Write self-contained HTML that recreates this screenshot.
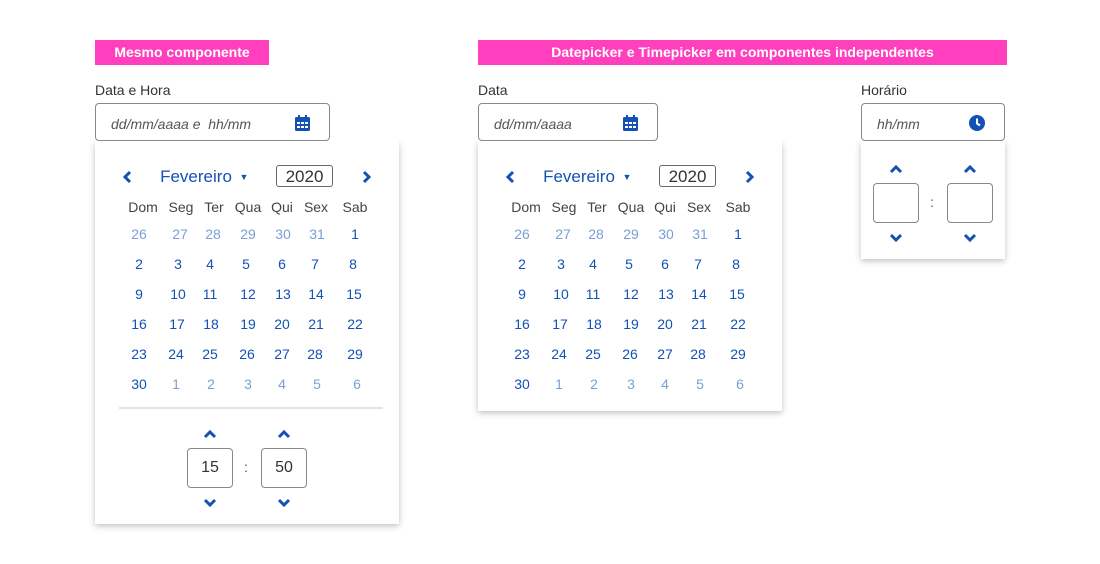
<!DOCTYPE html>
<html><head><meta charset="utf-8"><style>
body{margin:0;width:1100px;height:564px;background:#fff;font-family:"Liberation Sans",sans-serif;position:relative;overflow:hidden}
.a{position:absolute}
.c{position:absolute;transform:translate(-50%,-50%);white-space:nowrap}
.tag{position:absolute;background:#ff3fbd;color:#fff;font-weight:bold;font-size:14px;height:25px;line-height:25px;text-align:center}
.lbl{position:absolute;font-size:14px;color:#333}
.inp{position:absolute;border:1px solid #888;border-radius:4px;height:38px;box-sizing:border-box;background:#fff;z-index:2}
.ph{position:absolute;top:12px;font-style:italic;color:#555;font-size:14px}
.panel{position:absolute;background:#fff;box-shadow:0 2px 6px rgba(0,0,0,.25)}
.h{font-size:14px;color:#444}
.d{font-size:14px;color:#1351b4}
.o{font-size:14px;color:#7a9fd6}
.nav{color:#1351b4;font-size:17px}
.yr{position:absolute;border:1px solid #666;border-radius:3px;width:57px;height:22px;box-sizing:border-box;font-size:17px;text-align:center;line-height:21px;color:#333}
.tb{position:absolute;border:1px solid #888;border-radius:4px;width:46px;height:40px;box-sizing:border-box;text-align:center;line-height:38px;font-size:16px;color:#333}
</style></head><body>

<div class="tag" style="left:95px;top:40px;width:174px">Mesmo componente</div>
<div class="tag" style="left:478px;top:40px;width:529px">Datepicker e Timepicker em componentes independentes</div>

<div class="lbl" style="left:95px;top:82px">Data e Hora</div>
<div class="inp" style="left:95px;top:103px;width:235px"><span class="ph" style="left:15px">dd/mm/aaaa e &nbsp;hh/mm</span>
<svg class="a" style="left:199px;top:11px" width="15" height="16" viewBox="0 0 15 16"><rect x="0" y="2" width="15" height="14" rx="1.5" fill="#1351b4"/><rect x="3" y="0" width="2" height="4" fill="#1351b4"/><rect x="10" y="0" width="2" height="4" fill="#1351b4"/><g fill="#fff"><rect x="2" y="7" width="3" height="2"/><rect x="6" y="7" width="3" height="2"/><rect x="10" y="7" width="3" height="2"/><rect x="2" y="11" width="3" height="2"/><rect x="6" y="11" width="3" height="2"/><rect x="10" y="11" width="3" height="2"/></g></svg></div>

<div class="lbl" style="left:478px;top:82px">Data</div>
<div class="inp" style="left:478px;top:103px;width:180px"><span class="ph" style="left:15px">dd/mm/aaaa</span>
<svg class="a" style="left:144px;top:11px" width="15" height="16" viewBox="0 0 15 16"><rect x="0" y="2" width="15" height="14" rx="1.5" fill="#1351b4"/><rect x="3" y="0" width="2" height="4" fill="#1351b4"/><rect x="10" y="0" width="2" height="4" fill="#1351b4"/><g fill="#fff"><rect x="2" y="7" width="3" height="2"/><rect x="6" y="7" width="3" height="2"/><rect x="10" y="7" width="3" height="2"/><rect x="2" y="11" width="3" height="2"/><rect x="6" y="11" width="3" height="2"/><rect x="10" y="11" width="3" height="2"/></g></svg></div>

<div class="lbl" style="left:861px;top:82px">Horário</div>
<div class="inp" style="left:861px;top:103px;width:144px"><span class="ph" style="left:15px">hh/mm</span>
<svg class="a" style="left:107px;top:11px" width="16" height="16" viewBox="0 0 16 16"><circle cx="8" cy="8" r="8" fill="#1351b4"/><path d="M8 3.5V8.5L11 10.5" stroke="#fff" stroke-width="2" fill="none"/></svg></div>

<!-- panels -->
<div class="panel" style="left:95px;top:142px;width:304px;height:382px"></div>
<div class="panel" style="left:478px;top:142px;width:304px;height:269px"></div>
<div class="panel" style="left:861px;top:142px;width:144px;height:117px"></div>
<div class="a" style="left:95px;top:136px;width:304px;height:6px;background:#fff"></div>
<div class="a" style="left:478px;top:136px;width:304px;height:6px;background:#fff"></div>
<div class="a" style="left:861px;top:136px;width:144px;height:6px;background:#fff"></div>

<!-- left calendar -->
<svg class="a" style="left:122px;top:170px" width="10" height="14" viewBox="0 0 10 14"><path d="M8 2L3 7L8 12" stroke="#1351b4" stroke-width="3" fill="none"/></svg>
<svg class="a" style="left:362px;top:170px" width="10" height="14" viewBox="0 0 10 14"><path d="M2 2L7 7L2 12" stroke="#1351b4" stroke-width="3" fill="none"/></svg>
<span class="c nav" style="left:196px;top:177px">Fevereiro</span><span class="c" style="left:244px;top:177px;color:#1351b4;font-size:9px">▼</span>
<div class="yr" style="left:276px;top:165px">2020</div>
<span class="c h" style="left:143px;top:207px">Dom</span><span class="c h" style="left:181px;top:207px">Seg</span><span class="c h" style="left:214px;top:207px">Ter</span><span class="c h" style="left:248px;top:207px">Qua</span><span class="c h" style="left:282px;top:207px">Qui</span><span class="c h" style="left:316px;top:207px">Sex</span><span class="c h" style="left:355px;top:207px">Sab</span>
<span class="c o" style="left:139px;top:234px">26</span><span class="c o" style="left:180px;top:234px">27</span><span class="c o" style="left:213px;top:234px">28</span><span class="c o" style="left:248px;top:234px">29</span><span class="c o" style="left:283px;top:234px">30</span><span class="c o" style="left:317px;top:234px">31</span><span class="c d" style="left:355px;top:234px">1</span>
<span class="c d" style="left:139px;top:264px">2</span><span class="c d" style="left:178px;top:264px">3</span><span class="c d" style="left:210px;top:264px">4</span><span class="c d" style="left:246px;top:264px">5</span><span class="c d" style="left:282px;top:264px">6</span><span class="c d" style="left:315px;top:264px">7</span><span class="c d" style="left:353px;top:264px">8</span>
<span class="c d" style="left:139px;top:294px">9</span><span class="c d" style="left:178px;top:294px">10</span><span class="c d" style="left:210px;top:294px">11</span><span class="c d" style="left:248px;top:294px">12</span><span class="c d" style="left:283px;top:294px">13</span><span class="c d" style="left:316px;top:294px">14</span><span class="c d" style="left:354px;top:294px">15</span>
<span class="c d" style="left:139px;top:324px">16</span><span class="c d" style="left:177px;top:324px">17</span><span class="c d" style="left:211px;top:324px">18</span><span class="c d" style="left:248px;top:324px">19</span><span class="c d" style="left:282px;top:324px">20</span><span class="c d" style="left:316px;top:324px">21</span><span class="c d" style="left:355px;top:324px">22</span>
<span class="c d" style="left:139px;top:354px">23</span><span class="c d" style="left:176px;top:354px">24</span><span class="c d" style="left:210px;top:354px">25</span><span class="c d" style="left:247px;top:354px">26</span><span class="c d" style="left:282px;top:354px">27</span><span class="c d" style="left:315px;top:354px">28</span><span class="c d" style="left:355px;top:354px">29</span>
<span class="c d" style="left:139px;top:384px">30</span><span class="c o" style="left:176px;top:384px">1</span><span class="c o" style="left:211px;top:384px">2</span><span class="c o" style="left:248px;top:384px">3</span><span class="c o" style="left:282px;top:384px">4</span><span class="c o" style="left:317px;top:384px">5</span><span class="c o" style="left:357px;top:384px">6</span>
<div class="a" style="left:119px;top:407px;width:264px;height:2px;background:#e3e3e3"></div>

<!-- right calendar -->
<svg class="a" style="left:505px;top:170px" width="10" height="14" viewBox="0 0 10 14"><path d="M8 2L3 7L8 12" stroke="#1351b4" stroke-width="3" fill="none"/></svg>
<svg class="a" style="left:745px;top:170px" width="10" height="14" viewBox="0 0 10 14"><path d="M2 2L7 7L2 12" stroke="#1351b4" stroke-width="3" fill="none"/></svg>
<span class="c nav" style="left:579px;top:177px">Fevereiro</span><span class="c" style="left:627px;top:177px;color:#1351b4;font-size:9px">▼</span>
<div class="yr" style="left:659px;top:165px">2020</div>
<span class="c h" style="left:526px;top:207px">Dom</span><span class="c h" style="left:564px;top:207px">Seg</span><span class="c h" style="left:597px;top:207px">Ter</span><span class="c h" style="left:631px;top:207px">Qua</span><span class="c h" style="left:665px;top:207px">Qui</span><span class="c h" style="left:699px;top:207px">Sex</span><span class="c h" style="left:738px;top:207px">Sab</span>
<span class="c o" style="left:522px;top:234px">26</span><span class="c o" style="left:563px;top:234px">27</span><span class="c o" style="left:596px;top:234px">28</span><span class="c o" style="left:631px;top:234px">29</span><span class="c o" style="left:666px;top:234px">30</span><span class="c o" style="left:700px;top:234px">31</span><span class="c d" style="left:738px;top:234px">1</span>
<span class="c d" style="left:522px;top:264px">2</span><span class="c d" style="left:561px;top:264px">3</span><span class="c d" style="left:593px;top:264px">4</span><span class="c d" style="left:629px;top:264px">5</span><span class="c d" style="left:665px;top:264px">6</span><span class="c d" style="left:698px;top:264px">7</span><span class="c d" style="left:736px;top:264px">8</span>
<span class="c d" style="left:522px;top:294px">9</span><span class="c d" style="left:561px;top:294px">10</span><span class="c d" style="left:593px;top:294px">11</span><span class="c d" style="left:631px;top:294px">12</span><span class="c d" style="left:666px;top:294px">13</span><span class="c d" style="left:699px;top:294px">14</span><span class="c d" style="left:737px;top:294px">15</span>
<span class="c d" style="left:522px;top:324px">16</span><span class="c d" style="left:560px;top:324px">17</span><span class="c d" style="left:594px;top:324px">18</span><span class="c d" style="left:631px;top:324px">19</span><span class="c d" style="left:665px;top:324px">20</span><span class="c d" style="left:699px;top:324px">21</span><span class="c d" style="left:738px;top:324px">22</span>
<span class="c d" style="left:522px;top:354px">23</span><span class="c d" style="left:559px;top:354px">24</span><span class="c d" style="left:593px;top:354px">25</span><span class="c d" style="left:630px;top:354px">26</span><span class="c d" style="left:665px;top:354px">27</span><span class="c d" style="left:698px;top:354px">28</span><span class="c d" style="left:738px;top:354px">29</span>
<span class="c d" style="left:522px;top:384px">30</span><span class="c o" style="left:559px;top:384px">1</span><span class="c o" style="left:594px;top:384px">2</span><span class="c o" style="left:631px;top:384px">3</span><span class="c o" style="left:665px;top:384px">4</span><span class="c o" style="left:700px;top:384px">5</span><span class="c o" style="left:740px;top:384px">6</span>

<!-- time pickers -->
<svg width="0" height="0" style="position:absolute"><defs>
<path id="up" d="M2 7L7 2L12 7" stroke="#1351b4" stroke-width="3" fill="none"/>
<path id="dn" d="M2 2L7 7L12 2" stroke="#1351b4" stroke-width="3" fill="none"/></defs></svg>
<svg class="a" style="left:203px;top:430px" width="14" height="9"><use href="#up"/></svg>
<svg class="a" style="left:277px;top:430px" width="14" height="9"><use href="#up"/></svg>
<div class="tb" style="left:187px;top:448px">15</div>
<span class="c" style="left:246px;top:467px;color:#555;font-size:14px">:</span>
<div class="tb" style="left:261px;top:448px">50</div>
<svg class="a" style="left:203px;top:498px" width="14" height="9"><use href="#dn"/></svg>
<svg class="a" style="left:277px;top:498px" width="14" height="9"><use href="#dn"/></svg>

<svg class="a" style="left:889px;top:165px" width="14" height="9"><use href="#up"/></svg>
<svg class="a" style="left:963px;top:165px" width="14" height="9"><use href="#up"/></svg>
<div class="tb" style="left:873px;top:183px"></div>
<span class="c" style="left:932px;top:202px;color:#555;font-size:14px">:</span>
<div class="tb" style="left:947px;top:183px"></div>
<svg class="a" style="left:889px;top:233px" width="14" height="9"><use href="#dn"/></svg>
<svg class="a" style="left:963px;top:233px" width="14" height="9"><use href="#dn"/></svg>

</body></html>
